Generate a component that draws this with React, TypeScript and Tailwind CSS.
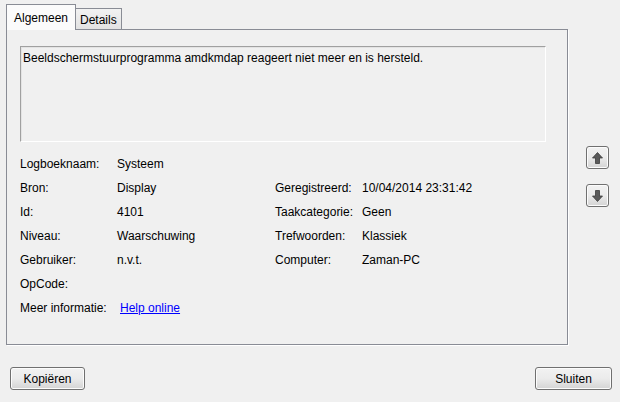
import React from 'react';

const font = { fontFamily: '"Segoe UI", "Liberation Sans", Arial, sans-serif' };

const Arrow = ({ down }: { down?: boolean }) => (
  <svg width="11" height="12" viewBox="0 0 11 12" className={down ? 'rotate-180' : ''}>
    <path d="M5.5 0.5 L10.5 6 L7.5 6 L7.5 11.5 L3.5 11.5 L3.5 6 L0.5 6 Z" fill="#5a5a5a" stroke="#3c3c3c" strokeWidth="0.8" strokeLinejoin="round" />
  </svg>
);

const WinButton = ({ children, className = '' }: { children: React.ReactNode; className?: string }) => (
  <button className={`rounded-[3px] border border-[#707070] bg-gradient-to-b from-[#f2f2f2] via-[#ebebeb] to-[#d4d4d4] shadow-[inset_0_0_0_1px_#fcfcfc] text-[12px] text-black flex items-center justify-center ${className}`}>
    {children}
  </button>
);

const rows: [string, React.ReactNode, string?, string?][] = [
  ['Logboeknaam:', 'Systeem'],
  ['Bron:', 'Display', 'Geregistreerd:', '10/04/2014 23:31:42'],
  ['Id:', '4101', 'Taakcategorie:', 'Geen'],
  ['Niveau:', 'Waarschuwing', 'Trefwoorden:', 'Klassiek'],
  ['Gebruiker:', 'n.v.t.', 'Computer:', 'Zaman-PC'],
  ['OpCode:', ''],
  ['Meer informatie:', <span className="ml-[3px] text-[#0000ff] underline underline-offset-1">Help online</span>],
];

export default function App() {
  return (
    <div className="w-[620px] h-[402px] bg-[#f0f0f0] text-[12px] text-black flex flex-col" style={font}>
      <div className="flex">
        <div className="ml-[6px] mt-[3px] w-[562px] flex flex-col">
          <div className="flex items-end h-[26px]">
            <div className="h-[26px] w-[70px] border border-b-0 border-[#898c95] bg-[#fbfbfb] pl-[7px] pt-[4px] relative z-10 -mb-px pb-px">
              Algemeen
            </div>
            <div className="h-[21px] w-[46px] border border-l-0 border-b-0 border-[#898c95] bg-gradient-to-b from-[#f2f2f2] to-[#e2e2e2] pl-[4px] pt-[2px]">
              Details
            </div>
          </div>
          <div className="h-[316px] border border-[#898c95] shadow-[1px_1px_0_#ffffff] flex flex-col pl-[13px] pr-[21px] pt-[16px]">
            <div className="h-[96px] border border-[#a0a0a0] border-r-white border-b-white shadow-[inset_1px_1px_0_#e3e3e3] pl-[2px] pt-[2px]">
              Beeldschermstuurprogramma amdkmdap reageert niet meer en is hersteld.
            </div>
            <div className="mt-[10px] flex flex-col">
              {rows.map(([l, v, l2, v2], i) => (
                <div key={i} className="h-[24px] flex items-center">
                  <span className="w-[97px] shrink-0">{l}</span>
                  <span className="w-[158px] shrink-0">{v}</span>
                  {l2 && <span className="w-[87px] shrink-0">{l2}</span>}
                  {v2 && <span>{v2}</span>}
                </div>
              ))}
            </div>
          </div>
        </div>
        <div className="ml-[18px] mt-[146px] flex flex-col gap-[15px]">
          <WinButton className="w-[23px] h-[23px]"><Arrow /></WinButton>
          <WinButton className="w-[23px] h-[23px]"><Arrow down /></WinButton>
        </div>
      </div>
      <div className="flex justify-between pl-[10px] pr-[8px] mt-[22px]">
        <WinButton className="w-[75px] h-[23px]">Kopiëren</WinButton>
        <WinButton className="w-[77px] h-[23px]">Sluiten</WinButton>
      </div>
    </div>
  );
}
